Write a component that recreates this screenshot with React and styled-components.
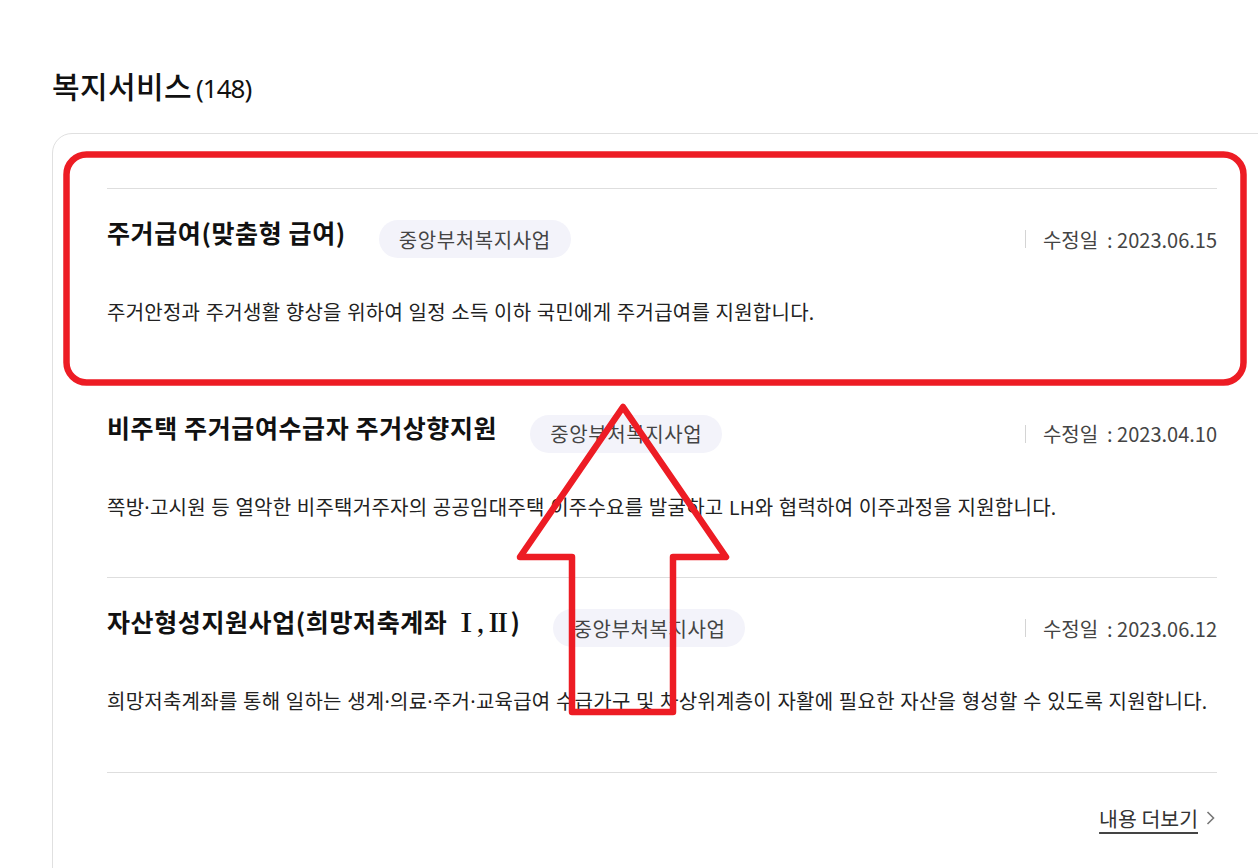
import React from 'react'
import styled, { createGlobalStyle } from 'styled-components'

const GlobalStyle = createGlobalStyle`
  html, body {
    margin: 0;
    padding: 0;
    background: #fff;
    overflow: hidden;
  }
  body {
    font-family: 'Noto Sans CJK KR', 'Noto Sans', sans-serif;
    color: #111;
  }
`

const Page = styled.div`
  position: relative;
  width: 1258px;
  height: 868px;
  padding: 64px 0 0 52px;
  box-sizing: border-box;
  overflow: hidden;
`

const Heading = styled.h2`
  margin: 0;
  height: 44px;
  line-height: 42px;
  font-size: 30px;
  font-weight: 500;
  color: #111;
  letter-spacing: 0.4px;
`

const Count = styled.span`
  font-family: 'Noto Sans', 'Noto Sans CJK KR', sans-serif;
  font-size: 26px;
  font-weight: 400;
  margin-left: 4px;
  letter-spacing: -1px;
`

const Card = styled.section`
  margin-top: 25px;
  width: 1240px;
  min-height: 900px;
  border: 1px solid #e0e0e0;
  border-radius: 20px;
  padding: 54px 0 0 54px;
  box-sizing: border-box;
`

const List = styled.ul`
  list-style: none;
  margin: 0;
  padding: 0;
  width: 1110px;
  border-bottom: 1px solid #dedede;
`

const Item = styled.li`
  border-top: 1px solid #dedede;
  padding: 31px 0 55.5px;
`

const Row = styled.div`
  display: flex;
  align-items: flex-start;
  height: 38px;
`

const Title = styled.h3`
  margin: -4px 0 0;
  font-size: 25px;
  line-height: 32px;
  font-weight: 700;
  color: #111;
  letter-spacing: 0.6px;
  white-space: nowrap;
`

const Roman = styled.span`
  font-family: 'Noto Serif CJK KR', 'Liberation Serif', serif;
  font-weight: 700;
  letter-spacing: -2.5px;
  margin-right: 2px;
`

const Badge = styled.span`
  display: inline-flex;
  align-items: center;
  height: 38px;
  padding: 0 20px;
  margin-left: 33px;
  border-radius: 19px;
  background: #f3f3fa;
  color: #444;
  font-size: 20px;
  letter-spacing: 0.6px;
  white-space: nowrap;
`

const DateBox = styled.div`
  margin-left: auto;
  display: flex;
  align-items: center;
  height: 38px;
  font-size: 20px;
  color: #444;
  white-space: nowrap;
`

const Divider = styled.i`
  width: 1px;
  height: 18px;
  background: #d4d4d4;
  margin-right: 17px;
`

const Desc = styled.p`
  margin: 41px 0 0;
  font-family: 'Noto Sans', 'Noto Sans CJK KR', sans-serif;
  font-size: 20px;
  line-height: 28px;
  color: #222;
  letter-spacing: 0.25px;
  white-space: nowrap;
`

const More = styled.div`
  width: 1110px;
  display: flex;
  justify-content: flex-end;
  margin-top: 31px;
`

const MoreLink = styled.a`
  display: inline-flex;
  align-items: center;
  font-size: 20.5px;
  line-height: 28px;
  color: #333;
  cursor: pointer;
  span {
    text-decoration: underline;
    text-underline-offset: 5px;
    text-decoration-thickness: 2px;
    text-decoration-color: #444;
  }
  svg {
    margin: 0 2px 0 8px;
  }
`

const Overlay = styled.svg`
  position: absolute;
  left: 0;
  top: 0;
  pointer-events: none;
`

const services = [
  {
    title: '주거급여(맞춤형 급여)',
    date: '2023.06.15',
    desc: '주거안정과 주거생활 향상을 위하여 일정 소득 이하 국민에게 주거급여를 지원합니다.'
  },
  {
    title: '비주택 주거급여수급자 주거상향지원',
    date: '2023.04.10',
    desc: '쪽방·고시원 등 열악한 비주택거주자의 공공임대주택 이주수요를 발굴하고 LH와 협력하여 이주과정을 지원합니다.'
  },
  {
    title: (
      <>
        자산형성지원사업(희망저축계좌 <Roman>Ⅰ, Ⅱ</Roman>)
      </>
    ),
    key: 'asset',
    date: '2023.06.12',
    desc: '희망저축계좌를 통해 일하는 생계·의료·주거·교육급여 수급가구 및 차상위계층이 자활에 필요한 자산을 형성할 수 있도록 지원합니다.'
  }
]

export default function App() {
  return (
    <Page>
      <GlobalStyle />
      <Heading>
        복지서비스<Count>(148)</Count>
      </Heading>
      <Card>
        <List>
          {services.map((s) => (
            <Item key={s.key || s.title}>
              <Row>
                <Title>{s.title}</Title>
                <Badge>중앙부처복지사업</Badge>
                <DateBox>
                  <Divider />
                  수정일 &nbsp;:&nbsp;{s.date}
                </DateBox>
              </Row>
              <Desc>{s.desc}</Desc>
            </Item>
          ))}
        </List>
        <More>
          <MoreLink>
            <span>내용 더보기</span>
            <svg width="9" height="16" viewBox="0 0 9 16">
              <path d="M1.5 2l6 6-6 6" fill="none" stroke="#777" strokeWidth="1.6" />
            </svg>
          </MoreLink>
        </More>
      </Card>

      <Overlay width="1258" height="868" viewBox="0 0 1258 868">
        <rect x="66.5" y="154.5" width="1177" height="228" rx="20" fill="none" stroke="#ed1c24" strokeWidth="6.5" />
        <polygon
          points="623,407 726,557 673,557 673,712 572,712 572,557 520,557"
          fill="none"
          stroke="#ed1c24"
          strokeWidth="6.5"
          strokeLinejoin="round"
        />
      </Overlay>
    </Page>
  )
}
